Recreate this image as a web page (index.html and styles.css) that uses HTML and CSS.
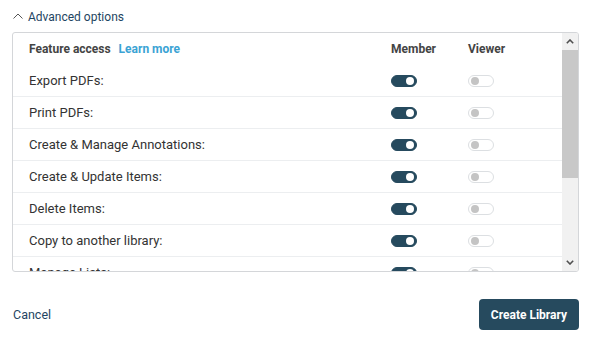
FILE: index.html
```html
<!DOCTYPE html>
<html>
<head>
    <meta charset="UTF-8">
    <title>Create Library</title>
    <link rel="stylesheet" href="styles.css">
</head>
<body>
    <div class="dialog">
        <button class="advanced-toggle">
            <svg class="chevron" width="10" height="6" viewBox="0 0 10 6"><path d="M0.5 5.5 L5 1 L9.5 5.5" fill="none" stroke="#555" stroke-width="1"/></svg>
            Advanced options
        </button>
        <div class="access-table">
            <div class="rows">
                <div class="row head">
                    <div class="label">Feature access <a class="learn" href="#">Learn more</a></div>
                    <div class="col">Member</div>
                    <div class="col">Viewer</div>
                </div>
                <div class="row">
                    <div class="label">Export PDFs:</div>
                    <div class="col"><span class="toggle on"></span></div>
                    <div class="col"><span class="toggle"></span></div>
                </div>
                <div class="row">
                    <div class="label">Print PDFs:</div>
                    <div class="col"><span class="toggle on"></span></div>
                    <div class="col"><span class="toggle"></span></div>
                </div>
                <div class="row">
                    <div class="label">Create &amp; Manage Annotations:</div>
                    <div class="col"><span class="toggle on"></span></div>
                    <div class="col"><span class="toggle"></span></div>
                </div>
                <div class="row">
                    <div class="label">Create &amp; Update Items:</div>
                    <div class="col"><span class="toggle on"></span></div>
                    <div class="col"><span class="toggle"></span></div>
                </div>
                <div class="row">
                    <div class="label">Delete Items:</div>
                    <div class="col"><span class="toggle on"></span></div>
                    <div class="col"><span class="toggle"></span></div>
                </div>
                <div class="row">
                    <div class="label">Copy to another library:</div>
                    <div class="col"><span class="toggle on"></span></div>
                    <div class="col"><span class="toggle"></span></div>
                </div>
                <div class="row">
                    <div class="label">Manage Lists:</div>
                    <div class="col"><span class="toggle on"></span></div>
                    <div class="col"><span class="toggle"></span></div>
                </div>
            </div>
            <div class="scrollbar">
                <div class="scroll-btn">
                    <svg width="8" height="5" viewBox="0 0 8 5"><path d="M0.8 4.2 L4 1 L7.2 4.2" fill="none" stroke="#505050" stroke-width="1.6"/></svg>
                </div>
                <div class="track"><div class="thumb"></div></div>
                <div class="scroll-btn">
                    <svg width="8" height="5" viewBox="0 0 8 5"><path d="M0.8 0.8 L4 4 L7.2 0.8" fill="none" stroke="#505050" stroke-width="1.6"/></svg>
                </div>
            </div>
        </div>
        <div class="footer">
            <a class="cancel" href="#">Cancel</a>
            <button class="create">Create Library</button>
        </div>
    </div>
</body>
</html>
```

FILE: styles.css
```css
body {
    margin: 0;
    font-family: Roboto, "Liberation Sans", sans-serif;
    font-size: 13px;
    color: #333;
    background: #fff;
}
.dialog {
    padding: 7px 15px 0 12px;
}
.advanced-toggle {
    display: flex;
    align-items: center;
    gap: 5px;
    background: none;
    border: none;
    padding: 0 0 0 1px;
    height: 20px;
    font-family: inherit;
    font-size: 12px;
    color: #1e4562;
    cursor: pointer;
}
.chevron {
    margin-top: -2px;
}
.access-table {
    display: flex;
    margin-top: 5px;
    height: 238px;
    border: 1px solid #d4d6d9;
    border-radius: 3px;
    overflow: hidden;
}
.rows {
    flex: 1;
    overflow: hidden;
}
.row {
    display: flex;
    align-items: center;
    height: 31px;
    padding-left: 16px;
    border-bottom: 1px solid #eceef0;
}
.row.head {
    height: 31px;
    padding-bottom: 1px;
    border-bottom: none;
    font-weight: bold;
    color: #444;
    font-size: 12px;
}
.label {
    width: 362px;
}
.learn {
    color: #3ba3d4;
    text-decoration: none;
    margin-left: 5px;
}
.col {
    width: 77px;
}
.toggle {
    display: block;
    position: relative;
    width: 26px;
    height: 12px;
    border-radius: 6px;
    box-sizing: border-box;
    border: 1px solid #dcdfe2;
    background: #fff;
}
.toggle::after {
    content: "";
    position: absolute;
    left: 2px;
    top: 1px;
    width: 8px;
    height: 8px;
    border-radius: 50%;
    background: #c4c4c4;
}
.toggle.on {
    background: #264a5e;
    border-color: #264a5e;
}
.toggle.on::after {
    left: auto;
    right: 2px;
    background: #fff;
}
.scrollbar {
    width: 16px;
    display: flex;
    flex-direction: column;
    background: #f1f1f1;
}
.scroll-btn {
    height: 17px;
    display: flex;
    align-items: center;
    justify-content: center;
}
.track {
    flex: 1;
}
.thumb {
    height: 128px;
    background: #c8c8c8;
}
.footer {
    display: flex;
    justify-content: space-between;
    align-items: center;
    margin-top: 27px;
    padding-left: 1px;
}
.cancel {
    color: #1e4562;
    text-decoration: none;
    font-size: 12.5px;
}
.create {
    background: #264a5e;
    color: #fff;
    border: none;
    border-radius: 4px;
    height: 31px;
    padding: 0 12px;
    font-family: inherit;
    font-weight: bold;
    font-size: 12px;
    cursor: pointer;
}
```
